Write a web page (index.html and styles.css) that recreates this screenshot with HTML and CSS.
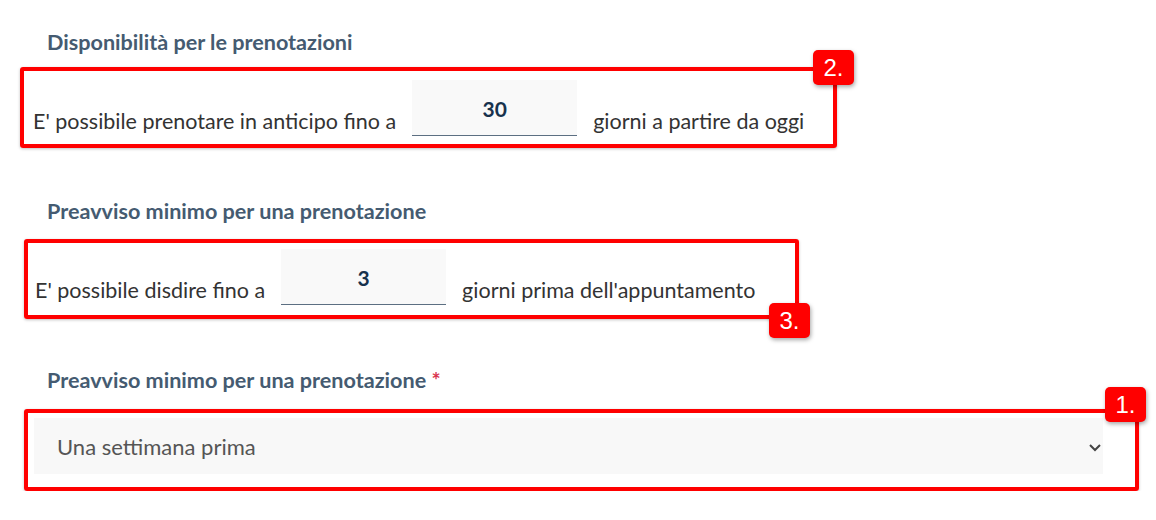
FILE: index.html
```html
<!DOCTYPE html>
<html lang="it">
<head>
    <meta charset="UTF-8">
    <meta name="viewport" content="width=device-width, initial-scale=1.0">
    <title>Impostazioni prenotazioni</title>
    <link rel="stylesheet" href="styles.css">
</head>
<body>
    <form class="settings">
        <!-- Disponibilità -->
        <div class="field field-first">
            <label class="field-label" for="giorni-anticipo">Disponibilità per le prenotazioni</label>
            <div class="mark mark-two">
                <span class="inline-text">E' possibile prenotare in anticipo fino a</span>
                <input class="num-input" type="text" id="giorni-anticipo" value="30">
                <span class="inline-text">giorni a partire da oggi</span>
                <span class="badge">2.</span>
            </div>
        </div>

        <!-- Disdetta -->
        <div class="field field-second">
            <label class="field-label" for="giorni-disdetta">Preavviso minimo per una prenotazione</label>
            <div class="mark mark-three">
                <span class="inline-text">E' possibile disdire fino a</span>
                <input class="num-input" type="text" id="giorni-disdetta" value="3">
                <span class="inline-text">giorni prima dell'appuntamento</span>
                <span class="badge badge-bottom">3.</span>
            </div>
        </div>

        <!-- Preavviso -->
        <div class="field field-third">
            <label class="field-label" for="preavviso">Preavviso minimo per una prenotazione <span class="required">*</span></label>
            <div class="mark mark-one">
                <div class="select-box">
                    <span class="select-value">Una settimana prima</span>
                    <svg class="chevron" width="14" height="9" viewBox="0 0 14 9">
                        <path d="M2 2 L7 7 L12 2" fill="none" stroke="#444" stroke-width="2"/>
                    </svg>
                </div>
                <span class="badge">1.</span>
            </div>
        </div>
    </form>
</body>
</html>
```

FILE: styles.css
```css
body {
    margin: 0;
    padding: 0;
    background-color: #fff;
    font-family: Lato, "Open Sans", sans-serif;
    color: #333;
}

.settings {
    padding: 29px 0 0 0;
}

.field-label {
    display: block;
    margin-left: 47px;
    font-size: 21.6px;
    line-height: 26px;
    font-weight: bold;
    color: #455b71;
}

.required {
    color: #d9364f;
}

.mark {
    position: relative;
    display: flex;
    align-items: flex-end;
    box-sizing: border-box;
    border: 4px solid #ff0000;
    border-radius: 3px;
    box-shadow: 0 1px 3px rgba(0, 0, 0, 0.25);
}

.field-first .field-label {
    margin-bottom: 12px;
}

.mark-two {
    margin-left: 20px;
    width: 817px;
    height: 81px;
    padding: 9px 0 8px 9px;
}

.field-second {
    margin-top: 50px;
}

.field-second .field-label {
    margin-bottom: 15px;
}

.mark-three {
    margin-left: 24px;
    width: 775px;
    height: 80px;
    padding: 7px 0 10px 7px;
}

.field-third {
    margin-top: 48px;
}

.field-third .field-label {
    margin-bottom: 16px;
}

.mark-one {
    margin-left: 24px;
    width: 1115px;
    height: 82px;
    padding: 5px 0 0 6px;
    align-items: flex-start;
}

.inline-text {
    font-size: 21.5px;
    line-height: 30px;
    color: #333;
    white-space: nowrap;
}

.num-input {
    box-sizing: border-box;
    width: 165px;
    height: 56px;
    margin: 0 16px;
    padding: 2px 0 0 0;
    border: none;
    border-bottom: 1px solid #5c6f82;
    background-color: #f9f9f9;
    font-family: inherit;
    font-size: 21px;
    font-weight: bold;
    color: #17324d;
    text-align: center;
    outline: none;
}

.select-box {
    box-sizing: border-box;
    display: flex;
    align-items: center;
    justify-content: space-between;
    width: 1069px;
    height: 56px;
    padding: 0 1px 0 23px;
    background-color: #f8f8f8;
}

.select-value {
    font-size: 22px;
    color: #555;
}

.chevron {
    display: block;
    margin-top: 3px;
}

.badge {
    position: absolute;
    top: -21px;
    right: -21px;
    width: 41px;
    height: 35px;
    border-radius: 5px;
    background-color: #ff0000;
    box-shadow: 1px 2px 4px rgba(0, 0, 0, 0.35);
    font-family: "Liberation Sans", Arial, sans-serif;
    font-size: 24px;
    line-height: 35px;
    color: #fff;
    text-align: center;
}

.badge-bottom {
    top: auto;
    bottom: -23px;
    right: -15px;
}

.mark-one .badge {
    right: -11px;
    top: -26px;
}
```
